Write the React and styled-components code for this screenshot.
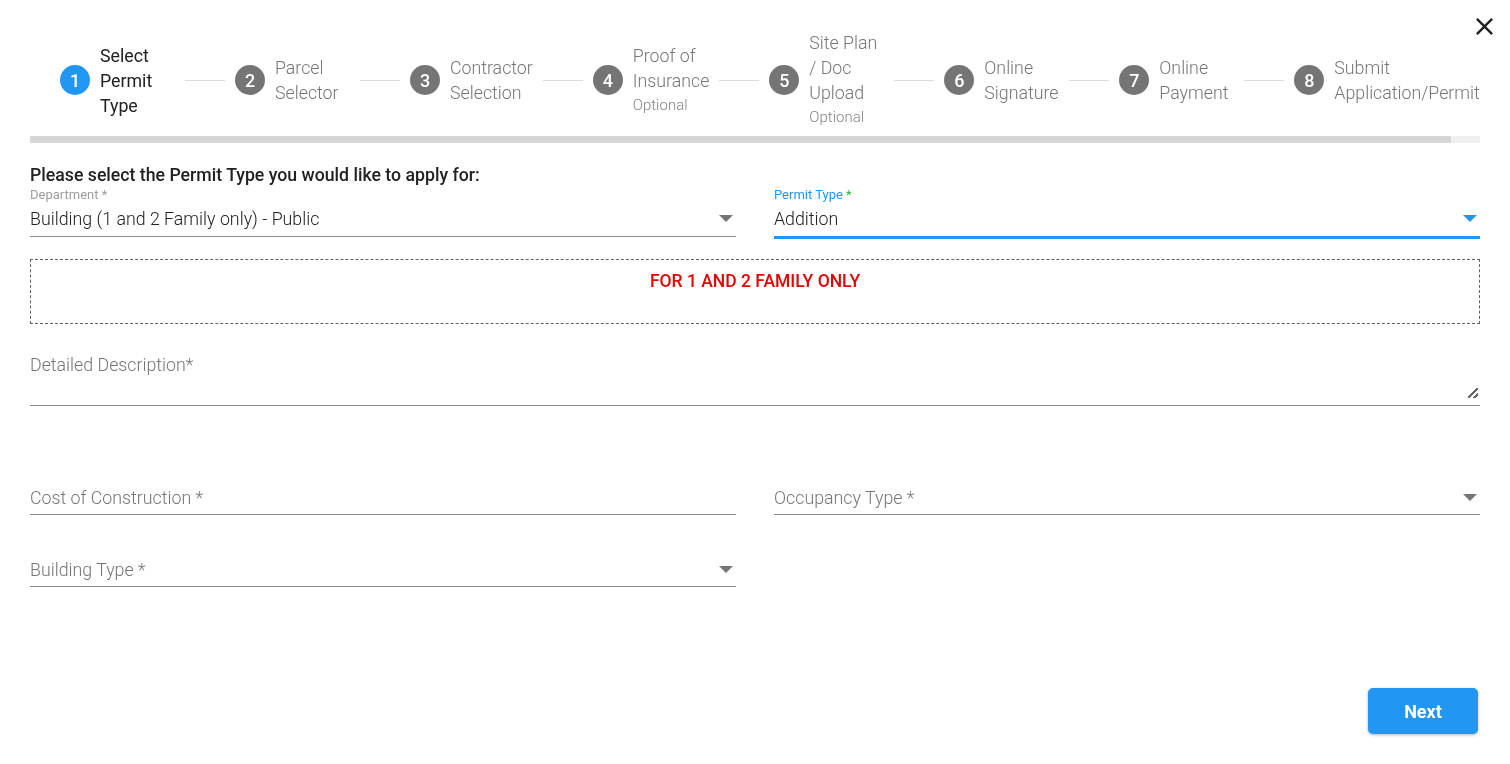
import React from 'react'
import styled, { createGlobalStyle } from 'styled-components'

const GlobalStyle = createGlobalStyle`
  html, body {
    margin: 0;
    padding: 0;
    background: #fff;
    font-family: Roboto, "Liberation Sans", sans-serif;
  }
  * { box-sizing: border-box; }
`

const Page = styled.div`
  position: relative;
  width: 1510px;
  height: 764px;
  padding: 18px 30px 0;
  overflow: hidden;
  will-change: transform;
`

const CloseButton = styled.button`
  position: absolute;
  top: 12px;
  right: 11px;
  width: 29px;
  height: 29px;
  padding: 0;
  border: 0;
  background: none;
  color: #212121;
  svg { display: block; width: 29px; height: 29px; fill: currentColor; }
`

const Stepper = styled.div`
  display: flex;
  align-items: center;
  height: 118px;
  padding: 6px 0 0 30px;
`

const Step = styled.div`
  display: flex;
  align-items: center;
  gap: 10px;
`

const Circle = styled.span`
  flex: none;
  width: 30px;
  height: 30px;
  border-radius: 50%;
  display: flex;
  align-items: center;
  justify-content: center;
  font-size: 18px;
  font-weight: 500;
  color: #fff;
  background: ${({ $active }) => ($active ? '#2196f3' : '#757575')};
`

const StepText = styled.div`
  width: min-content;
  min-width: 75px;
  padding-top: ${({ $optional }) => ($optional ? 0 : 2)}px;
  font-size: 17.78px;
  line-height: 25px;
  font-weight: ${({ $active }) => ($active ? 400 : 300)};
  color: ${({ $active }) => ($active ? '#212121' : '#757575')};
`

const Optional = styled.small`
  display: block;
  font-size: 15px;
  line-height: 23px;
  color: #858585;
  font-weight: 300;
`

const Connector = styled.span`
  flex: none;
  width: 40px;
  height: 1px;
  margin: 0 10px;
  background: #dcdcdc;
`

const Progress = styled.div`
  height: 7px;
  background: #f0f0f0;
`

const ProgressFill = styled.div`
  width: 98%;
  height: 100%;
  background: #d6d6d6;
`

const Heading = styled.h1`
  margin: 20px 0 0;
  font-size: 17.7px;
  line-height: 24px;
  font-weight: 500;
  color: #212121;
`

const Row = styled.div`
  display: grid;
  grid-template-columns: 706px 706px;
  column-gap: 38px;
  margin-top: ${({ $top }) => $top || 0}px;
`

const Field = styled.div`
  position: relative;
  height: ${({ $height }) => $height || 32}px;
  padding-bottom: 2px;
  display: flex;
  align-items: center;
  justify-content: space-between;
  border-bottom: ${({ $focused }) => ($focused ? '3px solid #2196f3' : '1px solid #8c8c8c')};
`

const FieldLabel = styled.label`
  display: block;
  font-size: 13px;
  line-height: 15px;
  color: ${({ $focused }) => ($focused ? '#2196f3' : '#9e9e9e')};
  em { font-style: normal; color: ${({ $focused }) => ($focused ? '#2eaa4f' : '#9e9e9e')}; }
`

const Value = styled.span`
  font-size: 17.8px;
  font-weight: 300;
  color: #212121;
`

const Placeholder = styled.span`
  font-size: 17.8px;
  font-weight: 300;
  color: #757575;
`

const Caret = styled.span`
  flex: none;
  width: 0;
  height: 0;
  margin-right: 3px;
  border-left: 7px solid transparent;
  border-right: 7px solid transparent;
  border-top: 7px solid ${({ $focused }) => ($focused ? '#2196f3' : '#757575')};
`

const Notice = styled.div`
  height: 65px;
  margin-top: 20px;
  padding-top: 10px;
  border: 1px dashed #616161;
  text-align: center;
  font-size: 17.5px;
  line-height: 22px;
  font-weight: 500;
  color: #e60000;
`

const TextAreaWrap = styled.div`
  height: 82px;
  padding: 0 2px 7px 0;
  border-bottom: 1px solid #8c8c8c;
`

const TextArea = styled.textarea`
  display: block;
  width: 100%;
  height: 74px;
  padding: 30px 0 0;
  border: 0;
  outline: none;
  resize: vertical;
  background: transparent;
  font-family: inherit;
  font-size: 17.8px;
  font-weight: 300;
  &::placeholder { color: #757575; opacity: 1; }
  &::-webkit-resizer {
    background: linear-gradient(135deg, transparent 42%, #666 42%, #666 56%, transparent 56%, transparent 74%, #666 74%, #666 86%, transparent 86%) no-repeat right bottom / 10px 10px;
  }
`

const Footer = styled.div`
  display: flex;
  justify-content: flex-end;
  padding-right: 2px;
  margin-top: 101px;
`

const NextButton = styled.button`
  width: 110px;
  height: 46px;
  border: 0;
  border-radius: 5px;
  background: #2196f3;
  color: #fff;
  font-family: inherit;
  font-size: 18px;
  font-weight: 700;
  box-shadow: 0 1px 3px rgba(0, 0, 0, 0.3);
`

const steps = [
  { label: 'Select Permit Type', active: true },
  { label: 'Parcel Selector' },
  { label: 'Contractor Selection' },
  { label: 'Proof of Insurance', optional: true },
  { label: 'Site Plan / Doc Upload', optional: true },
  { label: 'Online Signature' },
  { label: 'Online Payment' },
  { label: 'Submit Application/Permit' },
]

const App = () => (
  <Page>
    <GlobalStyle />
    <CloseButton aria-label="Close">
      <svg viewBox="0 0 24 24"><path d="M19 6.41L17.59 5 12 10.59 6.41 5 5 6.41 10.59 12 5 17.59 6.41 19 12 13.41 17.59 19 19 17.59 13.41 12z" /></svg>
    </CloseButton>

    <Stepper>
      {steps.map((step, i) => (
        <React.Fragment key={step.label}>
          {i > 0 && <Connector />}
          <Step>
            <Circle $active={step.active}>{i + 1}</Circle>
            <StepText $active={step.active} $optional={step.optional}>
              {step.label}
              {step.optional && <Optional>Optional</Optional>}
            </StepText>
          </Step>
        </React.Fragment>
      ))}
    </Stepper>
    <Progress><ProgressFill /></Progress>

    <Heading>Please select the Permit Type you would like to apply for:</Heading>
    <Row>
      <div>
        <FieldLabel>Department <em>*</em></FieldLabel>
        <Field $height={35}>
          <Value>Building (1 and 2 Family only) - Public</Value>
          <Caret />
        </Field>
      </div>
      <div>
        <FieldLabel $focused>Permit Type <em>*</em></FieldLabel>
        <Field $focused $height={37}>
          <Value>Addition</Value>
          <Caret $focused />
        </Field>
      </div>
    </Row>

    <Notice>FOR 1 AND 2 FAMILY ONLY</Notice>

    <TextAreaWrap>
      <TextArea placeholder="Detailed Description*" />
    </TextAreaWrap>

    <Row $top={77}>
      <Field>
        <Placeholder>Cost of Construction *</Placeholder>
      </Field>
      <Field>
        <Placeholder>Occupancy Type *</Placeholder>
        <Caret />
      </Field>
    </Row>
    <Row $top={40}>
      <Field>
        <Placeholder>Building Type *</Placeholder>
        <Caret />
      </Field>
    </Row>

    <Footer>
      <NextButton>Next</NextButton>
    </Footer>
  </Page>
)

export default App
